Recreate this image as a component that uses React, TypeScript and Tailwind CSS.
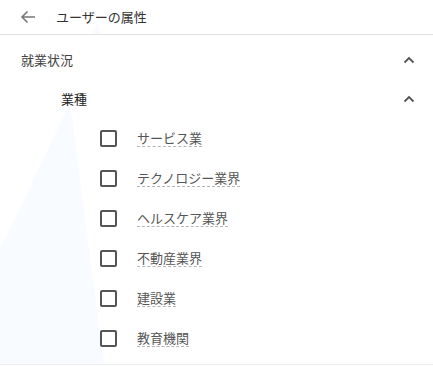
import React from 'react';

const INDUSTRIES = ['サービス業', 'テクノロジー業界', 'ヘルスケア業界', '不動産業界', '建設業', '教育機関'];

const ChevronUp: React.FC = () => (
  <svg width="12" height="8" viewBox="0 0 12 8" className="text-[#555]">
    <path d="M1.5 6.5 L6 2 L10.5 6.5" fill="none" stroke="currentColor" strokeWidth="1.8" />
  </svg>
);

const App: React.FC = () => {
  return (
    <div
      className="relative w-[433px] h-[366px] bg-white overflow-hidden text-[13px] text-[#333]"
      style={{ fontFamily: '"Noto Sans CJK JP", "Noto Sans", sans-serif' }}
    >
      {/* faint decorative shapes */}
      <svg className="absolute left-0 top-0 pointer-events-none" width="433" height="366">
        <polygon points="70,103 104,364 0,364 0,250" fill="#f8fbff" />
        <polygon points="97,20 101,34 93,34" fill="#f8fbff" />
      </svg>

      <div className="relative">
        {/* Header */}
        <div className="h-[35px] flex items-center border-b border-[#e2e2e2]">
          <svg width="16" height="14" viewBox="0 0 16 14" className="ml-[20px] text-[#777]">
            <path d="M15 7 H2 M7.5 1.5 L2 7 L7.5 12.5" fill="none" stroke="currentColor" strokeWidth="1.6" />
          </svg>
          <span className="ml-[20px] text-[#333]">ユーザーの属性</span>
        </div>

        <div className="pt-[5px] pb-[6px] border-b border-[#ececec]">
          <div className="h-10 flex items-center justify-between pl-[21px] pr-[18px]">
            <span className="text-[#444]">就業状況</span>
            <ChevronUp />
          </div>
          <div className="h-[38px] flex items-center justify-between pl-[61px] pr-[18px]">
            <span className="text-[#222]">業種</span>
            <ChevronUp />
          </div>
          {INDUSTRIES.map((label) => (
            <div key={label} className="h-10 flex items-center pl-[100px]">
              <span className="w-[17px] h-[17px] border-2 border-[#555] rounded-[2px]" />
              <span className="ml-[20px] text-[#555] border-b border-dashed border-[#b5b5b5] leading-[17px]">
                {label}
              </span>
            </div>
          ))}
        </div>
      </div>
    </div>
  );
};

export default App;
